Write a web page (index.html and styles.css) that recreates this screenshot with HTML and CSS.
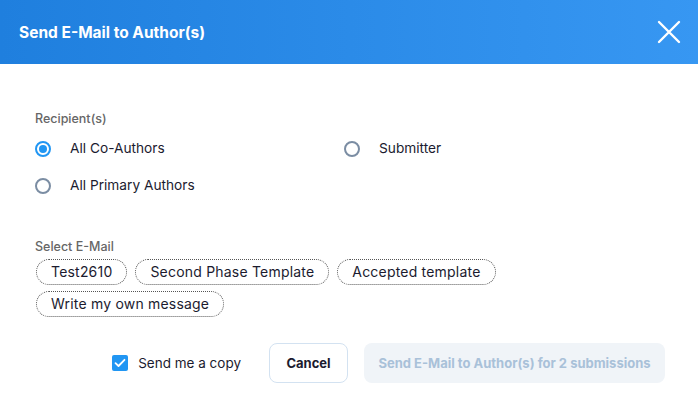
FILE: index.html
```html
<!DOCTYPE html>
<html lang="en">
<head>
    <meta charset="UTF-8">
    <title>Send E-Mail to Author(s)</title>
    <link rel="stylesheet" href="styles.css">
</head>
<body>
    <div class="modal">
        <div class="modal-header">
            <h2>Send E-Mail to Author(s)</h2>
            <button class="close-btn" aria-label="Close">
                <svg width="24" height="24" viewBox="0 0 24 24"><path d="M2 2 L22 22 M22 2 L2 22" stroke="#fff" stroke-width="2.4" stroke-linecap="round"/></svg>
            </button>
        </div>
        <div class="modal-body">
            <div class="field-label">Recipient(s)</div>
            <div class="radio-grid">
                <label class="radio checked"><span class="dot"></span>All Co-Authors</label>
                <label class="radio"><span class="dot"></span>Submitter</label>
                <label class="radio"><span class="dot"></span>All Primary Authors</label>
            </div>

            <div class="field-label select-label">Select E-Mail</div>
            <div class="chips">
                <span class="chip">Test2610</span>
                <span class="chip">Second Phase Template</span>
                <span class="chip">Accepted template</span>
                <span class="chip">Write my own message</span>
            </div>

            <div class="actions">
                <label class="copy">
                    <span class="box">
                        <svg width="12" height="10" viewBox="0 0 12 10"><path d="M1.5 5.2 L4.5 8 L10.5 1.8" stroke="#fff" stroke-width="1.8" fill="none" stroke-linecap="round" stroke-linejoin="round"/></svg>
                    </span>
                    Send me a copy
                </label>
                <button class="btn btn-cancel">Cancel</button>
                <button class="btn btn-send" disabled>Send E-Mail to Author(s) for 2 submissions</button>
            </div>
        </div>
    </div>
</body>
</html>
```

FILE: styles.css
```css
body {
    margin: 0;
    font-family: Inter, "Noto Sans", sans-serif;
    background: #fff;
    color: #1b1b2f;
}
.modal {
    width: 698px;
    height: 410px;
    overflow: hidden;
}
.modal-header {
    height: 64px;
    display: flex;
    align-items: center;
    justify-content: space-between;
    padding: 0 17px 0 19px;
    background: linear-gradient(90deg, #1f7fde, #3797f2);
}
.modal-header h2 {
    margin: 0;
    font-size: 15.5px;
    font-weight: 700;
    color: #fff;
}
.close-btn {
    background: none;
    border: none;
    padding: 0;
    width: 24px;
    height: 24px;
    cursor: pointer;
}
.modal-body {
    padding: 47px 33px 0 35px;
}
.field-label {
    font-size: 12.5px;
    font-weight: 500;
    color: #666;
    line-height: 16px;
}
.radio-grid {
    display: grid;
    grid-template-columns: 309px 1fr;
    row-gap: 18px;
    margin-top: 12px;
}
.radio {
    display: flex;
    align-items: center;
    font-size: 13.7px;
    line-height: 19px;
    color: #1b1b2f;
}
.radio .dot {
    width: 12px;
    height: 12px;
    border: 2px solid #7b8da3;
    border-radius: 50%;
    margin-right: 19px;
    position: relative;
}
.radio.checked .dot {
    border-color: #2196f3;
}
.radio.checked .dot::after {
    content: "";
    position: absolute;
    left: 2px;
    top: 2px;
    width: 8px;
    height: 8px;
    border-radius: 50%;
    background: #2196f3;
}
.select-label {
    margin-top: 44px;
}
.chips {
    display: flex;
    flex-wrap: wrap;
    gap: 6px 8px;
    margin-top: 4px;
    margin-left: 1px;
    width: 500px;
}
.chip {
    height: 24px;
    line-height: 24px;
    padding: 0 14px;
    border: 1px dotted #555;
    border-radius: 13px;
    font-size: 14px;
    letter-spacing: 0.2px;
    color: #1b1b2f;
}
.actions {
    display: flex;
    align-items: center;
    justify-content: flex-end;
    margin-top: 26px;
}
.copy {
    display: flex;
    align-items: center;
    font-size: 13.5px;
    color: #1b1b2f;
    margin-right: 28px;
}
.copy .box {
    width: 16px;
    height: 16px;
    border-radius: 2px;
    background: #2196f3;
    display: flex;
    align-items: center;
    justify-content: center;
    margin-right: 10px;
}
.btn {
    height: 40px;
    border-radius: 8px;
    font-family: inherit;
    font-size: 13px;
    font-weight: 700;
    padding: 0;
    white-space: nowrap;
}
.btn-cancel {
    width: 79px;
    background: #fff;
    border: 1px solid #d3e2f1;
    color: #1b1b2f;
    margin-right: 16px;
}
.btn-send {
    width: 301px;
    background: #f0f4f8;
    border: none;
    color: #a9c1d9;
}
```
